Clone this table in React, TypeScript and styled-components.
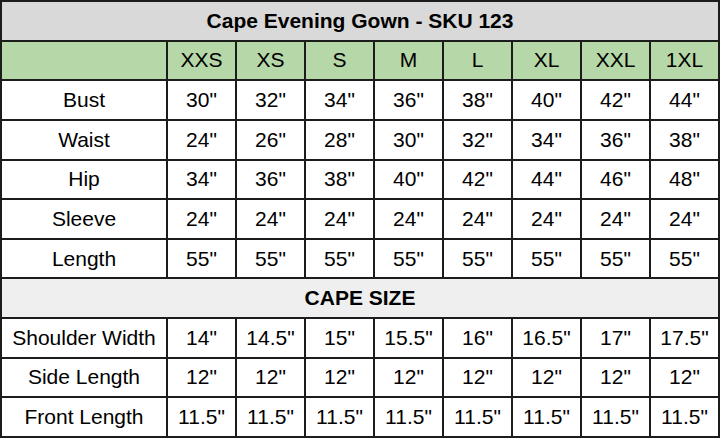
import React from "react";
import styled, { createGlobalStyle } from "styled-components";

const GlobalStyle = createGlobalStyle`
  html, body {
    margin: 0;
    padding: 0;
    background: #ffffff;
  }
  body {
    font-family: "Liberation Sans", Arial, sans-serif;
  }
`;

const Table = styled.table`
  width: 720px;
  height: 438px;
  border-collapse: collapse;
  table-layout: fixed;
  font-family: "Liberation Sans", Arial, sans-serif;
  color: #000000;
`;

const Cell = styled.td<{ $bg?: string; $bold?: boolean }>`
  border: 2px solid #1c1c1c;
  text-align: center;
  vertical-align: middle;
  padding: 0;
  font-size: 21px;
  font-weight: ${(p) => (p.$bold ? 700 : 400)};
  background: ${(p) => p.$bg ?? "#ffffff"};
  white-space: nowrap;
`;

const Row = styled.tr`
  height: 38px;
`;

const sizes = ["XXS", "XS", "S", "M", "L", "XL", "XXL", "1XL"];

const body: [string, string[]][] = [
  ["Bust", ["30", "32", "34", "36", "38", "40", "42", "44"]],
  ["Waist", ["24", "26", "28", "30", "32", "34", "36", "38"]],
  ["Hip", ["34", "36", "38", "40", "42", "44", "46", "48"]],
  ["Sleeve", ["24", "24", "24", "24", "24", "24", "24", "24"]],
  ["Length", ["55", "55", "55", "55", "55", "55", "55", "55"]],
];

const cape: [string, string[]][] = [
  ["Shoulder Width", ["14", "14.5", "15", "15.5", "16", "16.5", "17", "17.5"]],
  ["Side Length", ["12", "12", "12", "12", "12", "12", "12", "12"]],
  ["Front Length", ["11.5", "11.5", "11.5", "11.5", "11.5", "11.5", "11.5", "11.5"]],
];

const MeasureRow = ({ label, values }: { label: string; values: string[] }) => (
  <Row>
    <Cell>{label}</Cell>
    {values.map((v, i) => (
      <Cell key={i}>{v}"</Cell>
    ))}
  </Row>
);

export default function App() {
  return (
    <>
      <GlobalStyle />
      <Table>
        <colgroup>
          <col style={{ width: 166 }} />
          {sizes.map((s) => (
            <col key={s} />
          ))}
        </colgroup>
        <tbody>
          <Row>
            <Cell colSpan={9} $bg="#d9d9d9" $bold>
              Cape Evening Gown - SKU 123
            </Cell>
          </Row>
          <Row>
            <Cell $bg="#b6d7a8" />
            {sizes.map((s) => (
              <Cell key={s} $bg="#b6d7a8">
                {s}
              </Cell>
            ))}
          </Row>
          {body.map(([label, values]) => (
            <MeasureRow key={label} label={label} values={values} />
          ))}
          <Row>
            <Cell colSpan={9} $bg="#efefef" $bold>
              CAPE SIZE
            </Cell>
          </Row>
          {cape.map(([label, values]) => (
            <MeasureRow key={label} label={label} values={values} />
          ))}
        </tbody>
      </Table>
    </>
  );
}
